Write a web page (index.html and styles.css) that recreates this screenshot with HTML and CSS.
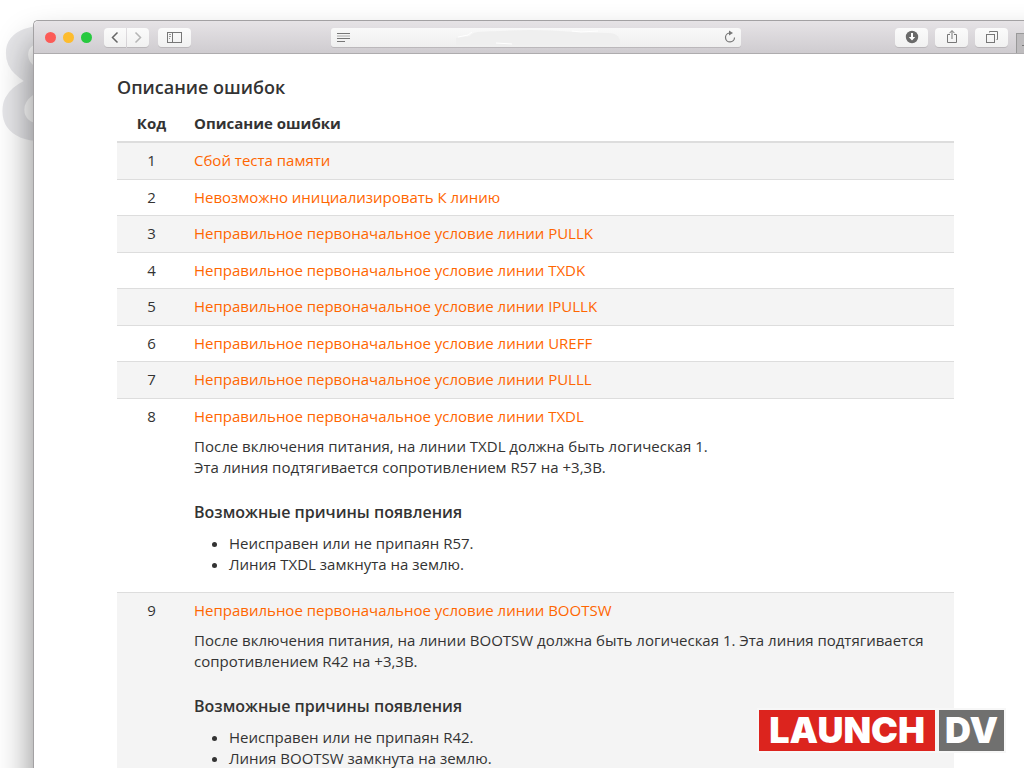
FILE: index.html
```html
<!DOCTYPE html>
<html lang="ru">
<head>
<meta charset="utf-8">
<title>Описание ошибок</title>
<link rel="stylesheet" href="styles.css">
</head>
<body>
<div class="backdrop-digit">8</div>
<div class="window">
  <header class="toolbar">
    <div class="lights">
      <button class="light light-close" aria-label="Закрыть"></button>
      <button class="light light-min" aria-label="Свернуть"></button>
      <button class="light light-max" aria-label="Развернуть"></button>
    </div>
    <div class="nav">
      <button class="tool tool-back" aria-label="Назад"><svg width="22" height="19" viewBox="0 0 22 19" fill="none" stroke="#666" stroke-width="1.5"><path d="M13.5 4.5 8.5 9.5l5 5"/></svg></button>
      <button class="tool tool-forward" aria-label="Вперёд"><svg width="22" height="19" viewBox="0 0 22 19" fill="none" stroke="#b5b5b5" stroke-width="1.5"><path d="M8.5 4.5l5 5-5 5"/></svg></button>
    </div>
    <button class="tool tool-wide" aria-label="Боковая панель"><svg width="15" height="11" viewBox="0 0 15 11" fill="none" stroke="#777"><rect x=".5" y=".5" width="14" height="10"/><path d="M5.500.5v10"/><path d="M2 2.500h2M2 4.500h2M2 6.500h1" stroke="#999"/></svg></button>
    <div class="address">
      <svg width="13" height="11" viewBox="0 0 13 11" stroke="#777"><path d="M0 1.500h13M0 6.500h13M0 9.500h8"/><path d="M0 4h13" stroke="#aaa"/></svg>
      <input class="address-input" type="text" aria-label="Адрес">
      <button class="reload" aria-label="Обновить"><svg width="12" height="14" viewBox="0 0 12 14" fill="none"><path d="M5.500 3a4.500 4.500 0 1 0 5 4.500" stroke="#777" stroke-width="1.200"/><path d="M5 .5 9 3 5 5.500z" fill="#777"/></svg></button>
      <svg class="address-smudge" viewBox="0 0 164 16" width="164" height="16"><path d="M0 9 14 7C18 1 30 3 44 2c28-2 50-1 74 1l34 1c8 0 11 3 12 8v4H0z" fill="#efefef"/><path d="M2 8l10-2 4-3M116 2l9 1 17-1M40 14l16 1" stroke="#fff" fill="none"/></svg>
    </div>
    <div class="actions">
      <button class="tool tool-wide" aria-label="Загрузки"><svg width="14" height="14" viewBox="0 0 14 14"><circle cx="7" cy="7" r="6.200" fill="#6a6a6a"/><path d="M6 3h2v4h2.200L7 10.500 3.800 7H6z" fill="#fff"/></svg></button>
      <button class="tool tool-wide" aria-label="Поделиться"><svg width="14" height="16" viewBox="0 0 14 16" fill="none" stroke="#777"><path d="M5 5.500H2.500v8h9v-8H9"/><path d="M7 10V2"/><path d="M4.500 4.200 7 1.500l2.500 2.700"/></svg></button>
      <button class="tool tool-wide" aria-label="Вкладки"><svg width="14" height="14" viewBox="0 0 14 14" fill="none" stroke="#777"><rect x="1.500" y="4.500" width="8" height="8"/><path d="M4.500 2.500v-1h8v8h-1"/></svg></button>
    </div>
    <button class="new-tab" aria-label="Новая вкладка"><svg width="16" height="16" viewBox="0 0 16 16" stroke="#777"><path d="M5 9.500h9M9.500 5v9"/></svg></button>
  </header>
  <main class="page">
    <h1 class="page-title">Описание ошибок</h1>
    <table class="errors">
      <thead><tr><th class="code">Код</th><th>Описание ошибки</th></tr></thead>
      <tbody>
        <tr><td class="code">1</td><td><a href="#e1">Сбой теста памяти</a></td></tr>
        <tr><td class="code">2</td><td><a href="#e2">Невозможно инициализировать К линию</a></td></tr>
        <tr><td class="code">3</td><td><a href="#e3">Неправильное первоначальное условие линии PULLK</a></td></tr>
        <tr><td class="code">4</td><td><a href="#e4">Неправильное первоначальное условие линии TXDK</a></td></tr>
        <tr><td class="code">5</td><td><a href="#e5">Неправильное первоначальное условие линии IPULLK</a></td></tr>
        <tr><td class="code">6</td><td><a href="#e6">Неправильное первоначальное условие линии UREFF</a></td></tr>
        <tr><td class="code">7</td><td><a href="#e7">Неправильное первоначальное условие линии PULLL</a></td></tr>
        <tr><td class="code">8</td><td><a href="#e8">Неправильное первоначальное условие линии TXDL</a>
          <div class="details">
            <p>После включения питания, на линии TXDL должна быть логическая 1.<br>Эта линия подтягивается сопротивлением R57 на +3,3В.</p>
            <h2>Возможные причины появления</h2>
            <ul><li>Неисправен или не припаян R57.</li><li>Линия TXDL замкнута на землю.</li></ul>
          </div></td></tr>
        <tr><td class="code">9</td><td><a href="#e9">Неправильное первоначальное условие линии BOOTSW</a>
          <div class="details">
            <p>После включения питания, на линии BOOTSW должна быть логическая 1. Эта линия подтягивается сопротивлением R42 на +3,3В.</p>
            <h2>Возможные причины появления</h2>
            <ul><li>Неисправен или не припаян R42.</li><li>Линия BOOTSW замкнута на землю.</li></ul>
          </div></td></tr>
      </tbody>
    </table>
  </main>
</div>
<div class="brand"><span class="brand-name">LAUNCH</span><span class="brand-suffix">DV</span></div>
</body>
</html>
```
FILE: styles.css
```css
* { box-sizing: border-box; }
html, body { height: 100%; }
body {
  margin: 0;
  padding: 20px 0 0 33px;
  overflow: hidden;
  position: relative;
  background: #fff;
  color: #333;
  font: 15px/21px "Open Sans", "Noto Sans", sans-serif;
}
button { padding: 0; border: 0; background: none; font: inherit; }
svg { display: block; }

.backdrop-digit {
  position: absolute;
  left: -3px;
  top: 1px;
  font: 700 156px/156px "Open Sans", sans-serif;
  color: #e6e6e9;
}
.window {
  position: relative;
  min-height: 110vh;
  margin-right: -40px;
  padding-right: 40px;
  border: 1px solid #a3a1a3;
  border-right: 0;
  border-radius: 5px 0 0 0;
  background: #fff;
  box-shadow: 0 24px 36px rgba(0, 0, 0, .48);
}
.toolbar {
  display: flex;
  align-items: center;
  height: 33px;
  padding-left: 11px;
  border-bottom: 1px solid #aeacae;
  border-radius: 5px 0 0 0;
  background: linear-gradient(#e6e3e6, #cfccd0);
  margin-right: -40px;
  padding-right: 40px;
}
.lights { display: flex; gap: 7px; }
.light { width: 11px; height: 11px; border-radius: 50%; }
.light-close { background: #fc5b57; }
.light-min { background: #fdbc2e; }
.light-max { background: #27c93f; }
.nav { display: flex; gap: 1px; margin: 0 9px 0 12px; }
.tool {
  display: flex;
  align-items: center;
  justify-content: center;
  width: 22px;
  height: 19px;
  border-radius: 4px;
  background: linear-gradient(#fbfbfb, #f1f1f1);
  box-shadow: 0 1px 0 #bbb8bb;
}
.tool-back { border-radius: 4px 0 0 4px; }
.tool-forward { border-radius: 0 4px 4px 0; }
.tool-wide { width: 33px; }
.address {
  position: relative;
  display: flex;
  align-items: center;
  flex: 1;
  height: 19px;
  margin: 0 154px 0 140px;
  padding: 0 5px 0 6px;
  border-radius: 3px;
  background: linear-gradient(#f9f9f9, #efefef);
  box-shadow: 0 1px 0 #bbb8bb;
}
.address-input { flex: 1; min-width: 0; height: 19px; border: 0; background: none; font: inherit; }
.address-smudge { position: absolute; left: 125px; top: 1px; pointer-events: none; }
.actions { display: flex; gap: 7px; }
.new-tab {
  align-self: flex-end;
  width: 8px;
  height: 20px;
  margin-left: 8px;
  border: 1px solid #999;
  border-width: 1px 0 0 1px;
  background: #bebcbe;
  overflow: hidden;
}
.page { padding: 21px 70px 0 83px; }
.page-title { margin: 0 0 7px; font-size: 18px; line-height: 24px; font-weight: 600; }
.errors { width: 100%; border-collapse: separate; border-spacing: 0; }
.errors th, .errors td { padding: 7px 8px; text-align: left; vertical-align: top; }
.errors .code { width: 69px; text-align: center; }
.errors th { border-bottom: 2px solid #ddd; font-weight: 700; }
.errors tbody tr + tr td { border-top: 1px solid #ddd; }
.errors tbody tr:nth-child(odd) td { background: #f4f4f4; }
.errors tbody tr:nth-child(odd) td { padding-bottom: 8px; }
.errors a { color: #ff6600; text-decoration: none; }
.details { padding: 9px 0 10px; }
.details p { margin: 0 0 24px; }
.details h2 { margin: 0 0 10px; font-size: 16px; line-height: 21px; font-weight: 600; }
.details ul { margin: 0; padding-left: 35px; }
.brand {
  position: absolute;
  right: 20px;
  bottom: 17px;
  display: flex;
  gap: 4px;
  color: #fff;
  font: 900 36px/41px Inter, sans-serif;
  outline: 2px solid #f7f7f7;
}
.brand-name { padding: 0 10px; background: #dc241e; }
.brand-suffix { padding: 0 6px; background: #70706f; }
```
